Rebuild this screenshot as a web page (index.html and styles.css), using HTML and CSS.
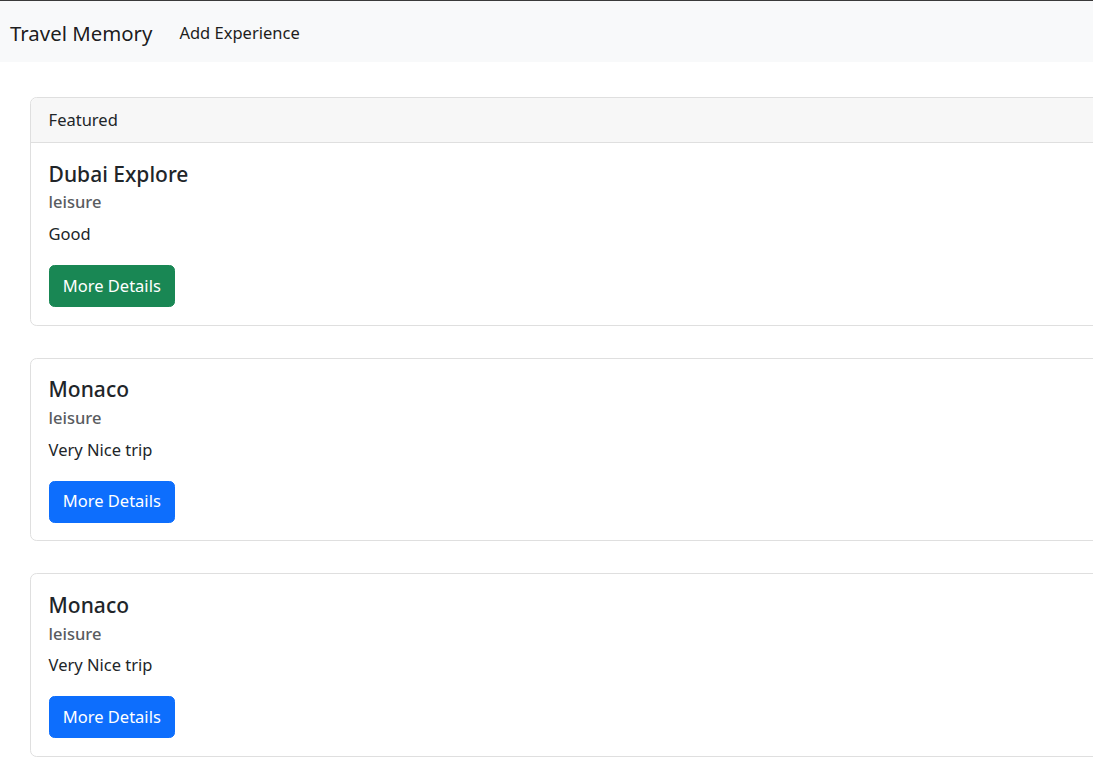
FILE: index.html
```html
<!DOCTYPE html>
<html lang="en">
<head>
<meta charset="utf-8">
<title>Travel Memory</title>
<link rel="stylesheet" href="styles.css">
</head>
<body>
<nav class="navbar">
  <a class="brand" href="#">Travel Memory</a>
  <a class="nav-link" href="#">Add Experience</a>
</nav>
<main class="list">
  <div class="card">
    <div class="card-header">Featured</div>
    <div class="card-body">
      <h5 class="card-title">Dubai Explore</h5>
      <h6 class="card-subtitle">leisure</h6>
      <p class="card-text">Good</p>
      <a class="btn btn-success" href="#">More Details</a>
    </div>
  </div>
  <div class="card">
    <div class="card-body">
      <h5 class="card-title">Monaco</h5>
      <h6 class="card-subtitle">leisure</h6>
      <p class="card-text">Very Nice trip</p>
      <a class="btn btn-primary" href="#">More Details</a>
    </div>
  </div>
  <div class="card">
    <div class="card-body">
      <h5 class="card-title">Monaco</h5>
      <h6 class="card-subtitle">leisure</h6>
      <p class="card-text">Very Nice trip</p>
      <a class="btn btn-primary" href="#">More Details</a>
    </div>
  </div>
</main>
</body>
</html>
```

FILE: styles.css
```css
html, body {
  margin: 0;
  padding: 0;
  overflow: hidden;
}
body {
  font-family: "Noto Sans", "Open Sans", sans-serif;
  font-size: 17.6px;
  line-height: 1.5;
  color: #212529;
  background: #fff;
  border-top: 1px solid #3a3a3a;
}
.navbar {
  display: flex;
  align-items: center;
  background: #f8f9fa;
  height: 61px;
  padding: 4px 10px 0;
  box-sizing: border-box;
}
.brand {
  font-size: 20.4px;
  color: rgba(0,0,0,.9);
  text-decoration: none;
  margin-right: 27px;
}
.nav-link {
  font-size: 16.5px;
  color: #1d1d1d;
  text-decoration: none;
}
.list {
  padding: 35px 0 0 30px;
  display: flex;
  flex-direction: column;
  gap: 32px;
}
.card {
  width: 1100px;
  border: 1px solid #dfdfdf;
  border-radius: 6.6px;
  background: #fff;
}
.card-header {
  height: 45px;
  box-sizing: border-box;
  padding: 9px 17.6px;
  background: #f7f7f7;
  border-bottom: 1px solid #dfdfdf;
  border-radius: 6px 6px 0 0;
  font-size: 16.5px;
  line-height: 26.4px;
}
.card-body {
  padding: 17.6px 17.6px 17.6px;
}
.card-title {
  margin: 0 0 8.8px;
  font-size: 21px;
  font-weight: 500;
  line-height: 26.4px;
}
.card-subtitle {
  margin: -4.4px 0 8.8px;
  font-size: 16.5px;
  font-weight: 500;
  line-height: 21px;
  color: #595c5f;
}
.card-text {
  margin: 0 0 17.6px;
  font-size: 16.5px;
  line-height: 26.4px;
}
.btn {
  display: inline-block;
  box-sizing: border-box;
  height: 41.8px;
  padding: 6.6px 13.2px;
  border-radius: 5.5px;
  color: #fff;
  text-decoration: none;
  font-size: 16.5px;
  line-height: 26.4px;
  border: 1px solid transparent;
}
.btn-success { background: #198754; border-color: #198754; }
.btn-primary { background: #0d6efd; border-color: #0d6efd; }
```
